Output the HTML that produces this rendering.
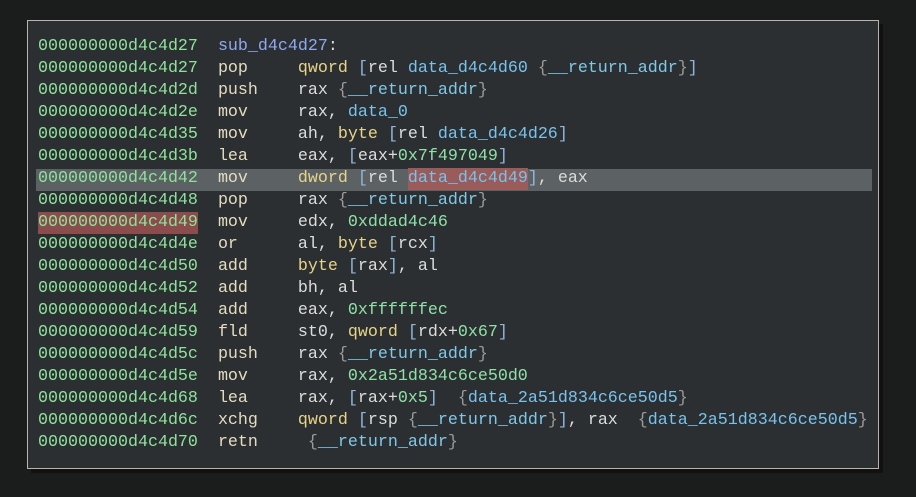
<!DOCTYPE html>
<html><head><meta charset="utf-8"><style>
html,body{margin:0;padding:0;background:#1b1c1c;width:916px;height:497px;overflow:hidden}
.panel{position:absolute;left:27px;top:20px;width:850px;height:447px;background:#2c2f31;border:1px solid #b8b4ac;box-shadow:4px 4px 0 #111}
.row{position:absolute;left:10px;height:22px;line-height:22px;font-family:"Liberation Mono",monospace;font-size:16.67px;white-space:pre;color:#dcdcdc}
.hl{position:absolute;left:8px;width:836px;height:22px;background:#5c6164}
.a{color:#8ee39c}.m{color:#e4dcc0}.k{color:#e6d48a}.d{color:#78c2ec}.b{color:#8fb6da}.g{color:#9a9a9a}.n{color:#8ee0a8}.f{color:#8ea8f0}.r{color:#dcdcdc}.ra{color:#80c8e8}
.red{background:#8a4d4c;display:inline-block;height:22px;vertical-align:top}.red2{background:#9a5c5a;display:inline-block;height:22px;vertical-align:top}
</style></head><body>
<div class="panel">
<div class="hl" style="top:148px"></div>
<div class="row" style="top:15px"><span class="a">000000000d4c4d27</span>  <span class="f">sub_d4c4d27</span><span class="r">:</span></div>
<div class="row" style="top:37px"><span class="a">000000000d4c4d27</span>  <span class="m">pop     </span><span class="k">qword</span> <span class="b">[</span>rel <span class="d">data_d4c4d60</span> <span class="g">{</span><span class="ra">__return_addr</span><span class="g">}</span><span class="b">]</span></div>
<div class="row" style="top:59px"><span class="a">000000000d4c4d2d</span>  <span class="m">push    </span>rax <span class="g">{</span><span class="ra">__return_addr</span><span class="g">}</span></div>
<div class="row" style="top:81px"><span class="a">000000000d4c4d2e</span>  <span class="m">mov     </span>rax, <span class="d">data_0</span></div>
<div class="row" style="top:103px"><span class="a">000000000d4c4d35</span>  <span class="m">mov     </span>ah, <span class="k">byte</span> <span class="b">[</span>rel <span class="d">data_d4c4d26</span><span class="b">]</span></div>
<div class="row" style="top:125px"><span class="a">000000000d4c4d3b</span>  <span class="m">lea     </span>eax, <span class="b">[</span>eax+<span class="n">0x7f497049</span><span class="b">]</span></div>
<div class="row" style="top:147px"><span class="a">000000000d4c4d42</span>  <span class="m">mov     </span><span class="k">dword</span> <span class="b">[</span>rel <span class="d red2">data_d4c4d49</span><span class="b">]</span>, eax</div>
<div class="row" style="top:169px"><span class="a">000000000d4c4d48</span>  <span class="m">pop     </span>rax <span class="g">{</span><span class="ra">__return_addr</span><span class="g">}</span></div>
<div class="row" style="top:191px"><span class="a red">000000000d4c4d49</span>  <span class="m">mov     </span>edx, <span class="n">0xddad4c46</span></div>
<div class="row" style="top:213px"><span class="a">000000000d4c4d4e</span>  <span class="m">or      </span>al, <span class="k">byte</span> <span class="b">[</span>rcx<span class="b">]</span></div>
<div class="row" style="top:235px"><span class="a">000000000d4c4d50</span>  <span class="m">add     </span><span class="k">byte</span> <span class="b">[</span>rax<span class="b">]</span>, al</div>
<div class="row" style="top:257px"><span class="a">000000000d4c4d52</span>  <span class="m">add     </span>bh, al</div>
<div class="row" style="top:279px"><span class="a">000000000d4c4d54</span>  <span class="m">add     </span>eax, <span class="n">0xffffffec</span></div>
<div class="row" style="top:301px"><span class="a">000000000d4c4d59</span>  <span class="m">fld     </span>st0, <span class="k">qword</span> <span class="b">[</span>rdx+<span class="n">0x67</span><span class="b">]</span></div>
<div class="row" style="top:323px"><span class="a">000000000d4c4d5c</span>  <span class="m">push    </span>rax <span class="g">{</span><span class="ra">__return_addr</span><span class="g">}</span></div>
<div class="row" style="top:345px"><span class="a">000000000d4c4d5e</span>  <span class="m">mov     </span>rax, <span class="n">0x2a51d834c6ce50d0</span></div>
<div class="row" style="top:367px"><span class="a">000000000d4c4d68</span>  <span class="m">lea     </span>rax, <span class="b">[</span>rax+<span class="n">0x5</span><span class="b">]</span>  <span class="g">{</span><span class="d">data_2a51d834c6ce50d5</span><span class="g">}</span></div>
<div class="row" style="top:389px"><span class="a">000000000d4c4d6c</span>  <span class="m">xchg    </span><span class="k">qword</span> <span class="b">[</span>rsp <span class="g">{</span><span class="ra">__return_addr</span><span class="g">}</span><span class="b">]</span>, rax  <span class="g">{</span><span class="d">data_2a51d834c6ce50d5</span><span class="g">}</span></div>
<div class="row" style="top:411px"><span class="a">000000000d4c4d70</span>  <span class="m">retn     </span><span class="g">{</span><span class="ra">__return_addr</span><span class="g">}</span></div>
</div>
</body></html>
